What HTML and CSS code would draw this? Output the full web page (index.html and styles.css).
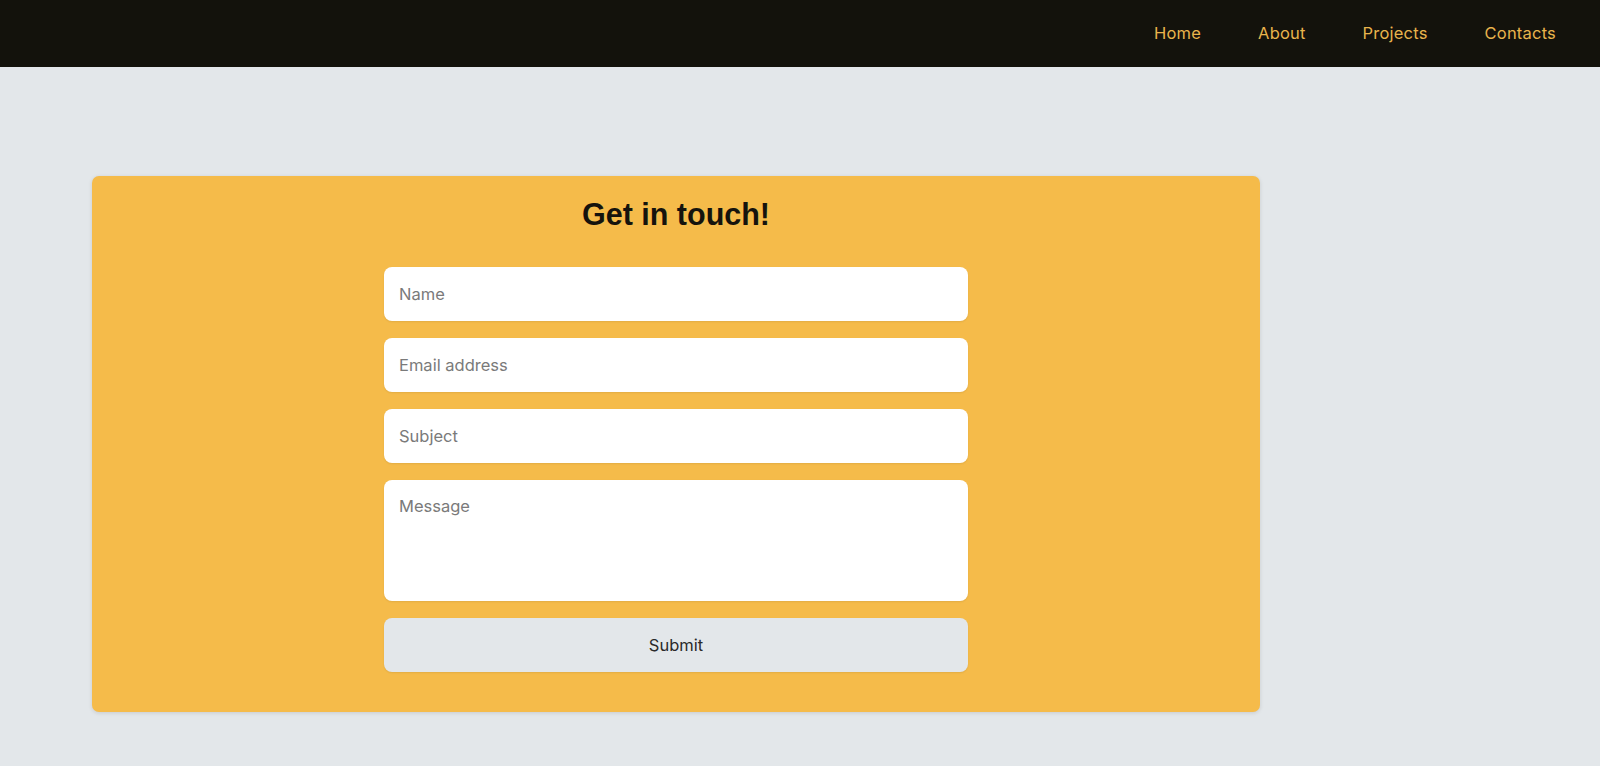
FILE: index.html
```html
<!DOCTYPE html>
<html lang="en">
<head>
<meta charset="utf-8">
<title>Contacts</title>
<link rel="stylesheet" href="styles.css">
</head>
<body>
<header class="navbar">
  <nav class="nav">
    <a class="nav-link" href="#">Home</a>
    <a class="nav-link" href="#">About</a>
    <a class="nav-link" href="#">Projects</a>
    <a class="nav-link" href="#">Contacts</a>
  </nav>
</header>
<main class="main">
  <section class="card">
    <h1 class="title">Get in touch!</h1>
    <form class="form">
      <input class="field" type="text" placeholder="Name">
      <input class="field" type="email" placeholder="Email address">
      <input class="field" type="text" placeholder="Subject">
      <textarea class="field message" placeholder="Message"></textarea>
      <button class="submit" type="button">Submit</button>
    </form>
  </section>
</main>
</body>
</html>
```

FILE: styles.css
```css
* { box-sizing: border-box; }

html, body {
  margin: 0;
  padding: 0;
  background: #e3e7ea;
  font-family: Inter, "Open Sans", sans-serif;
}

.navbar {
  height: 67px;
  background: #13120c;
  display: flex;
  align-items: center;
  justify-content: flex-end;
  padding: 0 44px 2px 0;
}

.nav {
  display: flex;
  gap: 57px;
}

.nav-link {
  color: #e9b44c;
  text-decoration: none;
  font-size: 16.5px;
  font-weight: 400;
  letter-spacing: 0.2px;
}

.main {
  padding: 109px 340px 54px 92px;
}

.card {
  width: 1168px;
  height: 536px;
  background: #f5bb4a;
  border-radius: 7px;
  box-shadow: 0 1px 4px rgba(0, 0, 0, 0.12);
  padding: 21px 0 40px;
  display: flex;
  flex-direction: column;
  align-items: center;
}

.title {
  margin: 0 0 36px;
  font-family: "Liberation Sans", Arial, sans-serif;
  font-weight: 700;
  font-size: 30.5px;
  line-height: 34px;
  color: #15130d;
}

.form {
  width: 584px;
  display: flex;
  flex-direction: column;
  gap: 17px;
}

.field {
  width: 100%;
  height: 54px;
  border: none;
  border-radius: 8px;
  background: #fff;
  padding: 0 15px;
  font-family: Inter, "Open Sans", sans-serif;
  font-size: 16.5px;
  color: #333;
  box-shadow: 0 1px 2px rgba(0, 0, 0, 0.08);
  outline: none;
}

.field::placeholder {
  color: #7a7a7a;
}

.message {
  height: 121px;
  padding: 15px;
  resize: none;
  line-height: 22px;
}

.submit {
  height: 54px;
  border: none;
  border-radius: 8px;
  background: #e3e7ea;
  font-family: Inter, "Open Sans", sans-serif;
  font-size: 16.5px;
  color: #2a2a2a;
  box-shadow: 0 1px 2px rgba(0, 0, 0, 0.08);
  cursor: pointer;
}
```
